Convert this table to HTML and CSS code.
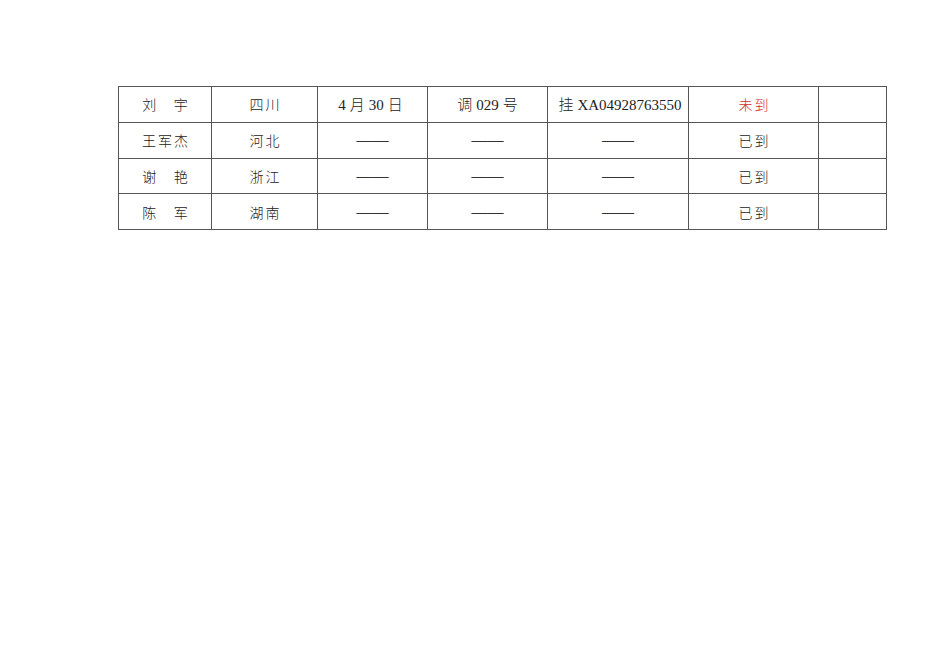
FILE: index.html
```html
<!DOCTYPE html>
<html>
<head>
<meta charset="utf-8">
<link rel="stylesheet" href="styles.css">
</head>
<body>
<table class="sheet">
  <colgroup>
    <col class="c1"><col class="c2"><col class="c3"><col class="c4"><col class="c5"><col class="c6"><col class="c7">
  </colgroup>
  <tr>
    <td class="cjk">刘&nbsp;&nbsp;&nbsp;宇</td>
    <td class="cjk">四川</td>
    <td class="mix">4<span class="cj">月</span>30<span class="cj">日</span></td>
    <td class="mix"><span class="cj">调</span>029<span class="cj">号</span></td>
    <td class="mix"><span class="cj">挂</span>XA04928763550</td>
    <td class="cjk red">未到</td>
    <td></td>
  </tr>
  <tr>
    <td class="cjk">王军杰</td>
    <td class="cjk">河北</td>
    <td class="dash">——</td>
    <td class="dash">——</td>
    <td class="dash">——</td>
    <td class="cjk">已到</td>
    <td></td>
  </tr>
  <tr>
    <td class="cjk">谢&nbsp;&nbsp;&nbsp;艳</td>
    <td class="cjk">浙江</td>
    <td class="dash">——</td>
    <td class="dash">——</td>
    <td class="dash">——</td>
    <td class="cjk">已到</td>
    <td></td>
  </tr>
  <tr>
    <td class="cjk">陈&nbsp;&nbsp;&nbsp;军</td>
    <td class="cjk">湖南</td>
    <td class="dash">——</td>
    <td class="dash">——</td>
    <td class="dash">——</td>
    <td class="cjk">已到</td>
    <td></td>
  </tr>
</table>
</body>
</html>
```

FILE: styles.css
```css
html, body {
  margin: 0;
  padding: 0;
  background: #ffffff;
}
body {
  padding-top: 86px;
  padding-left: 118px;
  font-family: "Liberation Serif", "Noto Sans CJK SC", serif;
  color: #222222;
}
.sheet {
  border-collapse: collapse;
  table-layout: fixed;
  width: 768px;
}
.c1 { width: 93px; }
.c2 { width: 106px; }
.c3 { width: 110px; }
.c4 { width: 120px; }
.c5 { width: 141px; }
.c6 { width: 130px; }
.c7 { width: 68px; }
.sheet td {
  border: 1px solid #555555;
  height: 34.75px;
  padding: 0;
  text-align: center;
  vertical-align: middle;
  font-size: 14px;
  line-height: 16px;
  white-space: nowrap;
}
.sheet td.cjk {
  font-family: "Noto Sans CJK SC", sans-serif;
  font-weight: 300;
  letter-spacing: 2px;
  text-indent: 2px;
}
.cj {
  font-family: "Noto Sans CJK SC", sans-serif;
  font-weight: 300;
  padding: 0 4px;
}
.sheet td.mix {
  font-size: 15px;
}
.sheet td.dash {
  font-size: 16px;
  color: #333333;
}
.sheet td.red {
  color: #d42a2a;
}
```
